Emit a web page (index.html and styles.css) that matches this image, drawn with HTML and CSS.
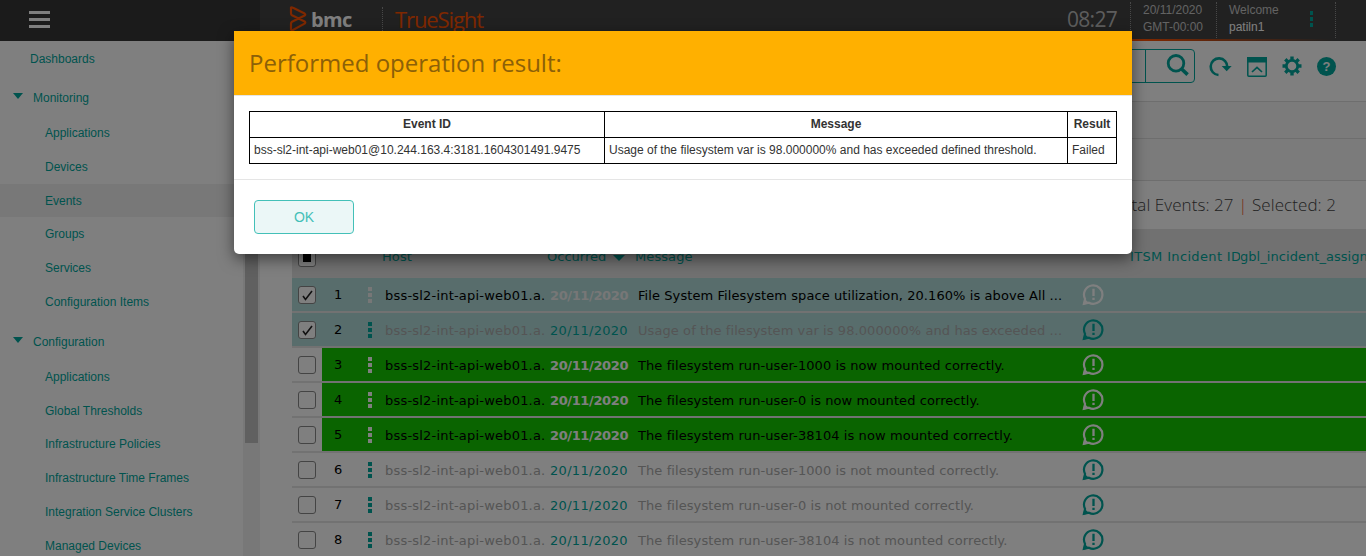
FILE: index.html
```html
<!DOCTYPE html>
<html lang="en">
<head>
<meta charset="utf-8">
<title>TrueSight</title>
<link rel="stylesheet" href="styles.css">
</head>
<body>
<svg class="defs">
  <symbol id="bubble" viewBox="0 0 24 24"><path d="M3.2 16.6A9.6 9.6 0 1 1 7.2 20.6L2 21.8Z" fill="none" stroke="currentColor" stroke-width="2.3"/><path d="M1.2 22.8L2.6 16.5l5 4.6z" fill="currentColor"/><path d="M12 6v7.5M12 15.3v2.4" stroke="currentColor" stroke-width="2.4"/></symbol>
</svg>
<div class="app">
  <header class="top">
    <div class="top-left"><div class="burger"><i></i><i></i><i></i></div></div>
    <div class="top-right">
      <svg class="logo" width="18" height="26" viewBox="0 0 18 26"><path d="M2 1.6Q2.6 1 4 1.8L15.6 7.6Q17 8.6 15.6 9.6L3 15.8Q2 16.4 2 17.8V23.4Q2.6 24.8 4 24L15.6 17.6Q17 16.5 15.6 15.4L3 9.2Q2 8.6 2 7.2Z" fill="none" stroke="#fe5000" stroke-width="2.2" stroke-linejoin="round"/></svg>
      <span class="bmc">bmc</span>
      <span class="brand">TrueSight</span>
      <span class="clock">08:27</span>
      <div class="date">20/11/2020<br>GMT-00:00</div>
      <div class="user">Welcome<br><b>patiln1</b></div>
      <div class="user-menu"><div class="kebab"><i></i><i></i><i></i></div></div>
    </div>
  </header>
  <div class="body">
    <nav class="side">
      <a class="root">Dashboards</a>
      <a class="group">Monitoring</a>
      <a>Applications</a><a>Devices</a><a class="active">Events</a><a>Groups</a><a>Services</a><a>Configuration Items</a>
      <a class="group second">Configuration</a>
      <a>Applications</a><a>Global Thresholds</a><a>Infrastructure Policies</a><a>Infrastructure Time Frames</a><a>Integration Service Clusters</a><a>Managed Devices</a>
    </nav>
    <div class="scroll"><div class="thumb"></div></div>
    <main class="main">
      <div class="tools">
        <div class="search"><span class="field"></span><span class="go"><svg width="26" height="26" viewBox="0 0 26 26"><circle cx="11" cy="10.3" r="7.8" fill="none" stroke="currentColor" stroke-width="2.8"/><path d="M16.6 16l6 5.6" stroke="currentColor" stroke-width="3.6"/></svg></span></div>
        <svg class="t1" width="24" height="22" viewBox="0 0 24 22"><path d="M9.5 19A8.3 8.3 0 1 1 18.3 11" fill="none" stroke="currentColor" stroke-width="2.6"/><path d="M12.7 10h10l-5 5.2z" fill="currentColor"/></svg>
        <svg class="t2" width="20" height="20" viewBox="0 0 20 20"><rect x=".8" y=".8" width="18.4" height="18.4" rx="1" fill="none" stroke="currentColor" stroke-width="1.5"/><path d="M0 0h20v5.5H0z" fill="currentColor"/><path d="M5 15l5-4.7 5 4.7" fill="none" stroke="currentColor" stroke-width="1.7"/></svg>
        <svg class="t3" width="20" height="20" viewBox="0 0 20 20"><circle cx="10" cy="10" r="5.7" fill="none" stroke="currentColor" stroke-width="2.8"/><path d="M10 .5v4M10 15.5v4M.5 10h4M15.5 10h4M3.3 3.3l2.8 2.8M13.9 13.9l2.8 2.8M16.7 3.3l-2.8 2.8M6.1 13.9l-2.8 2.8" stroke="currentColor" stroke-width="3.4"/></svg>
        <span class="help">?</span>
      </div>
      <div class="crumbs"></div><div class="filters"></div>
      <div class="totals">Total Events: 27 <em>|</em> Selected: 2</div>
      <div class="grid">
        <div class="head">
          <span class="box partial"></span><span class="h-host">Host</span><span class="h-occ">Occurred</span><span class="h-msg">Message</span><span class="h-itsm">ITSM Incident ID</span><span class="h-gbl">gbl_incident_assign</span>
        </div>
        <div id="rows"></div>
      </div>
    </main>
  </div>
</div>
<div class="overlay">
  <section class="modal">
    <h1>Performed operation result:</h1>
    <div class="content">
      <table>
        <tr><th class="c1">Event ID</th><th class="c2">Message</th><th class="c3">Result</th></tr>
        <tr><td>bss-sl2-int-api-web01@10.244.163.4:3181.1604301491.9475</td><td>Usage of the filesystem var is 98.000000% and has exceeded defined threshold.</td><td>Failed</td></tr>
      </table>
    </div>
    <footer><button>OK</button></footer>
  </section>
</div>
<script src="rows.js"></script>
</body>
</html>
```
FILE: styles.css
```css
* { box-sizing: border-box; }
body { margin: 0; width: 1366px; height: 556px; overflow: hidden; font: 12px "Liberation Sans", Arial, sans-serif; }
.defs { display: none; }
.app { height: 556px; overflow: hidden; background: #fff; }
.top { display: flex; height: 41px; }
.top-left { width: 260px; background: #363636; padding: 11px 0 0 29px; }
.burger { display: flex; flex-direction: column; gap: 4px; width: 21px; }
.burger i { height: 3px; background: #fff; }
.top-right { flex: 1; display: flex; background: linear-gradient(90deg, #fe5000 80%, #424242 97%) bottom / 100% 2px no-repeat, #424242; }
.logo { margin: 6px 0 0 29px; }
.bmc { margin: 7px 0 0 4px; width: 72px; height: 34px; font: bold 20px/26px "Open Sans", sans-serif; letter-spacing: -.6px; color: #fff; border-right: 1px dotted #909090; flex: none; }
.brand { margin: 3px 0 0 12px; width: 672px; font: 22px/32px "Open Sans", sans-serif; letter-spacing: -1.1px; color: #fe5000; }
.clock { font: 21px/38px "Open Sans", sans-serif; letter-spacing: -.7px; width: 63px; color: #bbb; }
.date, .user { height: 36px; margin-top: 2px; padding-left: 12px; border-left: 1px dotted #909090; line-height: 17px; color: #c6c6c6; }
.date { width: 86px; }
.user { width: 84px; }
.user b { color: #fff; font-weight: normal; }
.kebab { display: flex; flex-direction: column; gap: 2px; width: 4px; color: #00a79d; }
.kebab i { width: 4px; height: 4px; background: currentColor; }
.user-menu { margin: 2px 0 0 10px; padding-top: 9px; width: 26px; height: 36px; border-right: 1px dotted #909090; }
.user-menu i { width: 3px; }
.body { display: flex; height: 515px; }
.side { width: 243px; color: #00a79d; flex: none; padding-top: 1px; }
.side a { display: block; height: 33.8px; line-height: 34px; padding-left: 45px; }
.side .root { padding-left: 30px; height: 39px; }
.side .group { padding-left: 33px; height: 35px; position: relative; }
.side .group::before { content: ""; position: absolute; left: 13px; top: 12px; border: 5px solid transparent; border-top: 6px solid #00a79d; border-bottom: 0; }
.side .second { margin-top: 6px; }
.side .active { background: #f0f0f0; }
.scroll { width: 17px; background: #f1f1f1; flex: none; padding: 0 2px; }
.thumb { height: 402px; background: #c1c1c1; }
.main { flex: 1; min-width: 0; }
.tools { height: 61px; display: flex; color: #00a79d; border-bottom: 1px solid #ddd; }
.search { display: flex; width: 903px; margin: 8px 0 0 32px; height: 34px; border: 1px solid #00a79d; border-radius: 4px; }
.field { flex: 1; background: #fff; }
.go { width: 49px; border-left: 1px solid #00a79d; padding: 3px 0 0 19px; }
.t1 { margin: 15px 0 0 14px; }
.t2 { margin: 16px 0 0 14px; }
.t3 { margin: 15px 0 0 15px; }
.help { width: 19px; height: 19px; margin: 16px 0 0 15px; border-radius: 50%; background: #00a79d; color: #fff; text-align: center; font: bold 13px/19px "Liberation Sans", sans-serif; }
.crumbs { height: 37px; background: #f6f6f6; border-bottom: 1px solid #ddd; }
.filters { height: 42px; background: #f6f6f6; border-bottom: 1px solid #ddd; }
.totals { height: 48px; padding-right: 30px; text-align: right; font: 300 17px/47px "Open Sans", sans-serif; letter-spacing: .08px; color: #444; }
.totals em { font-style: normal; color: #f0602c; }
.grid { margin-left: 32px; font: 13px "DejaVu Sans", Verdana, sans-serif; letter-spacing: .09px; }
.head { height: 49px; display: flex; background: #e3e3e3; color: #00a79d; padding: 13px 0 0 6px; line-height: 30px; white-space: nowrap; overflow: hidden; }
.head span { flex: none; }
.box { width: 18px; height: 18px; border: 1px solid #888; border-radius: 3px; background: #fff; flex: none; }
.partial { padding: 4px; margin-top: 7px; }
.partial::before { content: ""; display: block; height: 8px; background: #000; }
.h-host { margin-left: 66px; width: 165px; }
.h-occ { width: 88px; position: relative; letter-spacing: 0; }
.h-occ::after { content: ""; position: absolute; left: 66px; top: 13px; border: 6px solid transparent; border-top-color: #00a79d; border-bottom: 0; }
.h-msg { width: 495px; }
.h-itsm { width: 110px; overflow: hidden; letter-spacing: .35px; }
.h-gbl { letter-spacing: .05px; }
.row { display: flex; height: 35px; border-bottom: 2px solid #e4e4e4; line-height: 35px; white-space: nowrap; color: #aaa; }
.pick { width: 30px; padding: 8px 0 0 6px; flex: none; }
.pick svg { display: block; }
.cells { flex: 1; display: flex; min-width: 0; height: 33px; }
.num { width: 46px; padding-left: 12px; color: #000; line-height: 33px; }
.row .kebab { margin-top: 9px; width: 17px; color: #00a79d; }
.host { width: 165px; letter-spacing: .2px; }
.when { width: 88px; color: #00a79d; letter-spacing: .3px; }
.msg { width: 444px; letter-spacing: .08px; }
.bubble { width: 23px; height: 23px; margin-top: 5px; color: #00a79d; }
.sel { background: #b0dbd9; }
.green .cells { background: #14c800; }
.strong { color: #000; }
.strong .when { font-weight: bold; letter-spacing: -.38px; color: #fff; }
.strong .kebab, .strong .bubble { color: #fff; }
.sel.strong .when, .sel.strong .kebab { color: #eee; }
.overlay { position: absolute; inset: 0; background: rgba(0, 0, 0, .5); }
.modal { width: 898px; height: 223px; margin: 31px 0 0 234px; background: #fff; border-radius: 0 0 5px 5px; box-shadow: 0 5px 15px rgba(0, 0, 0, .5); overflow: hidden; }
.modal h1 { margin: 0; height: 65px; padding-left: 15px; background: #ffb000; border-bottom: 1px solid #e5e5e5; font: 24px/64px "Open Sans", sans-serif; color: #8c6008; }
.content { padding: 15px; height: 84px; border-bottom: 1px solid #e5e5e5; }
table { width: 868px; border-collapse: collapse; table-layout: fixed; color: #333; }
th, td { border: 1px solid #000; height: 26px; padding: 0 4px 2px; white-space: nowrap; text-align: left; }
th { text-align: center; }
.c1 { width: 355px; }
.c2 { width: 463px; }
footer { padding: 20px; }
button { display: block; width: 100px; height: 34px; border: 1px solid #43c0b8; border-radius: 4px; background: #ebf7f7; color: #43c0b8; font: 14px "Liberation Sans", sans-serif; }
```
FILE: rows.js
```js
const data = [
  ["sel strong", "File System Filesystem space utilization, 20.160% is above All ..."],
  ["sel", "Usage of the filesystem var is 98.000000% and has exceeded ..."],
  ["green strong", "The filesystem run-user-1000 is now mounted correctly."],
  ["green strong", "The filesystem run-user-0 is now mounted correctly."],
  ["green strong", "The filesystem run-user-38104 is now mounted correctly."],
  ["", "The filesystem run-user-1000 is not mounted correctly."],
  ["", "The filesystem run-user-0 is not mounted correctly."],
  ["", "The filesystem run-user-38104 is not mounted correctly."]
];
document.getElementById("rows").innerHTML = data.map(([cls, msg], i) => `
<div class="row ${cls}"><div class="pick"><div class="box">${cls.includes("sel") ? '<svg width="16" height="16" viewBox="0 0 16 16"><path d="M4 9l2.5 3.5L13 4" fill="none" stroke="#222" stroke-width="1.6"/></svg>' : ""}</div></div>
<div class="cells"><span class="num">${i + 1}</span><div class="kebab"><i></i><i></i><i></i></div><span class="host">bss-sl2-int-api-web01.a.</span><span class="when">20/11/2020</span><span class="msg">${msg}</span><svg class="bubble"><use href="#bubble"/></svg></div></div>`).join("");
```
